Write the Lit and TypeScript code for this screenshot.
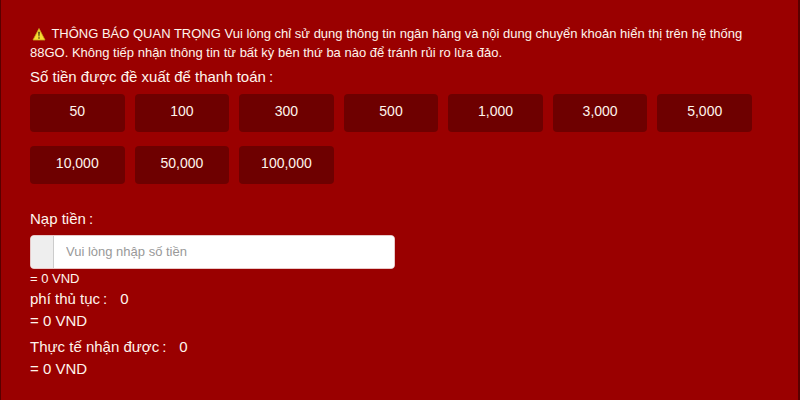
import { LitElement, html, css } from "lit";
import { customElement, property, state } from "lit/decorators.js";

const AMOUNTS = [50, 100, 300, 500, 1000, 3000, 5000, 10000, 50000, 100000];
const format = (n: number) => n.toLocaleString("en-US");

@customElement("amount-grid")
export class AmountGrid extends LitElement {
  @property({ attribute: false }) amounts: number[] = [];

  static styles = css`
    :host {
      display: block;
    }
    .grid {
      display: grid;
      grid-template-columns: repeat(7, 1fr);
      column-gap: 10px;
      row-gap: 14px;
    }
    .amount {
      height: 38px;
      padding: 0 0 4px;
      border: 0;
      border-radius: 4px;
      background: #6e0000;
      color: #fff4ec;
      font: 14px/20px "Liberation Sans", Arial, sans-serif;
      cursor: pointer;
    }
    .amount:hover {
      background: #5c0000;
    }
  `;

  private pick(amount: number) {
    this.dispatchEvent(new CustomEvent("pick", { detail: amount }));
  }

  render() {
    return html`<div class="grid">
      ${this.amounts.map(
        (a) => html`<button class="amount" type="button" @click=${() => this.pick(a)}>${format(a)}</button>`
      )}
    </div>`;
  }
}

@customElement("app-root")
export class AppRoot extends LitElement {
  @state() private value = "";

  static styles = css`
    :host {
      display: block;
      box-sizing: border-box;
      min-height: 100vh;
      padding: 24px 28px 19px 29px;
      border: solid #5a0000;
      border-width: 0 2px 0 1px;
      background: #9a0000;
      color: #fff4ec;
      font: 15px/22px "Liberation Sans", Arial, sans-serif;
    }
    .notice {
      margin: 0;
      font-size: 13px;
      line-height: 19px;
    }
    .warning {
      width: 14px;
      height: 14px;
      margin: 0 2px;
      vertical-align: -3px;
    }
    .heading {
      margin: 4px 0 6px;
      font-size: 15px;
      font-weight: normal;
      line-height: 22px;
    }
    .amounts {
      margin-right: 18px;
    }
    .label {
      display: block;
      margin: 24px 0 5px;
    }
    .colon {
      margin-left: 3px;
    }
    .field {
      display: flex;
      box-sizing: border-box;
      max-width: 365px;
      height: 34px;
      border: 1px solid #e8c8c8;
      border-radius: 4px;
      overflow: hidden;
      background: #fff;
    }
    .addon {
      flex: none;
      width: 22px;
      border-right: 1px solid #ccc;
      background: #eee;
    }
    .input {
      flex: 1;
      min-width: 0;
      padding: 0 12px;
      border: 0;
      outline: 0;
      background: #fff;
      color: #555;
      font: 13px/20px "Liberation Sans", Arial, sans-serif;
    }
    .input::placeholder {
      color: #999;
      opacity: 1;
    }
    .converted {
      font-size: 13px;
      line-height: 19px;
    }
    .row {
      display: flex;
    }
    .amount {
      margin-left: 13px;
    }
    .received {
      margin-top: 4px;
    }
  `;

  private onInput(e: Event) {
    this.value = (e.target as HTMLInputElement).value;
  }

  render() {
    const total = format(Number(this.value) || 0);
    return html`
      <p class="notice">
        <svg class="warning" viewBox="0 0 14 14" aria-hidden="true">
          <path d="M7 1.5 L13 13 H1 Z" fill="#f7dc32" stroke="#c9a51d" stroke-width=".8" stroke-linejoin="round" />
          <path d="M6.2 4.8 H7.8 L7.4 9.4 H6.6 Z" fill="#38300f" />
          <circle cx="7" cy="11" r=".8" fill="#38300f" />
        </svg>
        THÔNG BÁO QUAN TRỌNG Vui lòng chỉ sử dụng thông tin ngân hàng và nội dung chuyển khoản hiển thị trên hệ
        thống 88GO. Không tiếp nhận thông tin từ bất kỳ bên thứ ba nào để tránh rủi ro lừa đảo.
      </p>
      <h2 class="heading">Số tiền được đề xuất để thanh toán<span class="colon">:</span></h2>
      <amount-grid
        class="amounts"
        .amounts=${AMOUNTS}
        @pick=${(e: CustomEvent<number>) => (this.value = String(e.detail))}
      ></amount-grid>
      <label class="label" for="deposit">Nạp tiền<span class="colon">:</span></label>
      <div class="field">
        <span class="addon"></span>
        <input
          id="deposit"
          class="input"
          type="text"
          inputmode="numeric"
          placeholder="Vui lòng nhập số tiền"
          .value=${this.value}
          @input=${this.onInput}
        />
      </div>
      <div class="converted">= ${total} VND</div>
      <div class="row">phí thủ tục<span class="colon">:</span><span class="amount">0</span></div>
      <div>= 0 VND</div>
      <div class="row received">
        Thực tế nhận được<span class="colon">:</span><span class="amount">${total}</span>
      </div>
      <div>= ${total} VND</div>
    `;
  }
}
